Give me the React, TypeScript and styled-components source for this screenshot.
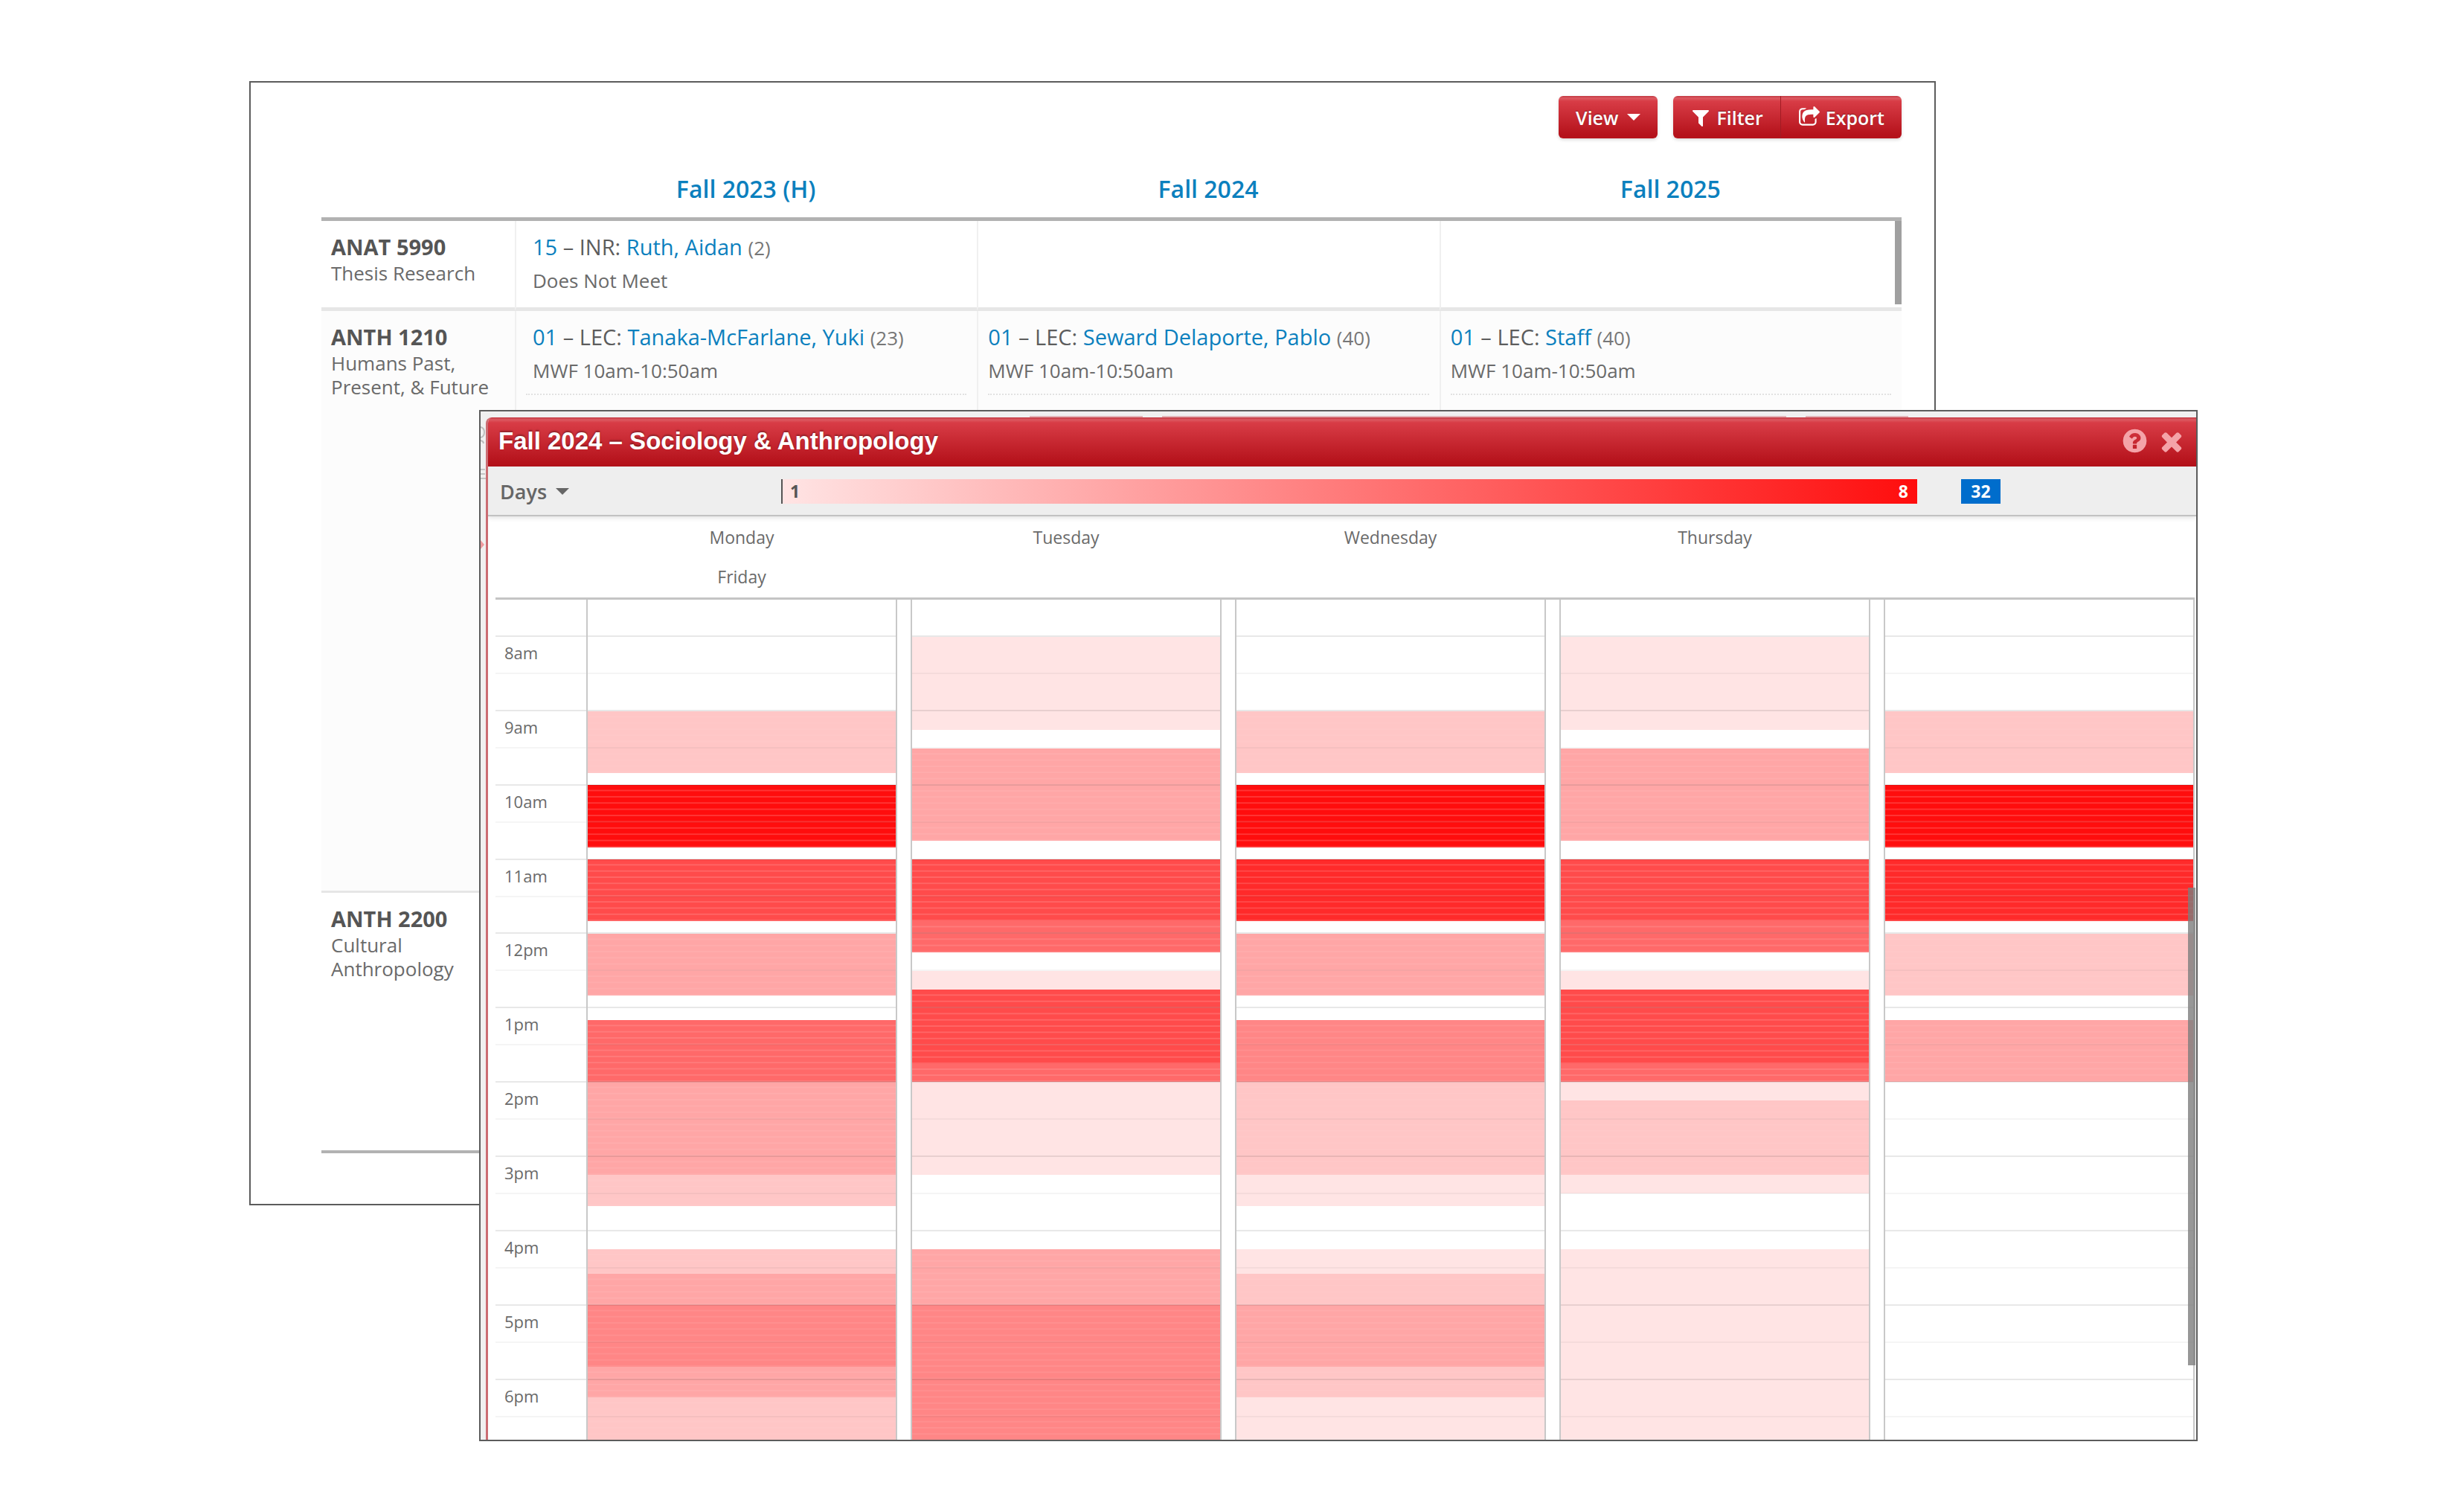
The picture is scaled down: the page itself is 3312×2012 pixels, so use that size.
import React from "react";
import styled, { createGlobalStyle } from "styled-components";

const GlobalStyle = createGlobalStyle`
  * { box-sizing: border-box; }
  body {
    margin: 0;
    background: #ffffff;
    color: #6a6a6a;
    font-family: "Open Sans", "Noto Sans", sans-serif;
    font-size: 26px;
  }
  button { font-family: inherit; border: 0; margin: 0; background: none; cursor: pointer; }
  a { color: #0b80be; text-decoration: none; }
`;

const redGradient = "linear-gradient(#c2363f 0, #dc5a62 3px, #d83c46 7px, #b5121b 92%, #b5121b 100%)";

/* ---------- page ---------- */

const Page = styled.main`
  display: grid;
  grid-template-columns: 335fr 309fr 1958fr 352fr 358fr;
  align-items: start;
  padding: 109px 0 75px;
`;

/* ---------- schedule panel ---------- */

const Panel = styled.section`
  grid-column: 2 / 4;
  grid-row: 1;
  border: 2px solid #5c5c5c;
  background: #ffffff;
  padding: 18px 44px 68px 95px;
`;

const Toolbar = styled.div`
  display: flex;
  justify-content: flex-end;
  gap: 21px;
`;

const ButtonGroup = styled.div`
  display: flex;
  border-radius: 6px;
  overflow: hidden;
  box-shadow: 0 2px 4px rgba(0, 0, 0, 0.15);
`;

const ToolButton = styled.button`
  display: flex;
  align-items: center;
  gap: 7px;
  height: 57px;
  padding: 0 23px;
  background: ${redGradient};
  color: #ffffff;
  font-size: 25px;
  font-weight: 600;
  line-height: 36px;
  text-shadow: 0 -1px 1px rgba(0, 0, 0, 0.35);
  & + & { border-left: 1px solid #a11c24; }
`;

const Caret = styled.span`
  border: 9px solid transparent;
  border-top-color: currentColor;
  border-bottom: 0;
  margin-left: 5px;
`;

const TableWrap = styled.div`
  position: relative;
`;

const Table = styled.table`
  width: 100%;
  table-layout: fixed;
  border-collapse: separate;
  border-spacing: 0;
  border-bottom: 4px solid #b2b2b2;
`;

const TermHead = styled.th`
  height: 111px;
  padding: 46px 0 0;
  border-bottom: 5px solid #b2b2b2;
  color: #0b80be;
  font-size: 32px;
  line-height: 44px;
  font-weight: 600;
  vertical-align: top;
`;

const CornerHead = styled.td`
  width: 260px;
  border-bottom: 5px solid #b2b2b2;
`;

const Row = styled.tr<{ $height: number; $rule: number; $shade?: boolean }>`
  height: ${(p) => p.$height}px;
  background: ${(p) => (p.$shade ? "#fcfcfc" : "#ffffff")};
  & > * { border-bottom: ${(p) => p.$rule}px solid #e6e6e6; }
`;

const CourseCell = styled.th`
  padding: 16px 12px 0 13px;
  text-align: left;
  vertical-align: top;
  font-weight: 400;
  font-size: 26px;
  line-height: 32px;
`;

const CourseCode = styled.div`
  color: #555555;
  font-size: 29px;
  line-height: 38px;
  font-weight: 700;
`;

const TermCell = styled.td<{ $first?: boolean }>`
  padding: 15px 14px 0 13px;
  border-left: 2px solid #f0f0f0;
  vertical-align: top;
`;

const Offering = styled.div<{ $more?: boolean; $indent?: boolean }>`
  padding: 0 0 13px ${(p) => (p.$indent ? "9px" : "0")};
  border-bottom: ${(p) => (p.$more ? "2px dotted #e2e2e2" : "0")};
`;

const OfferingTitle = styled.div`
  color: #5c5c5c;
  font-size: 29px;
  line-height: 40px;
`;

const Seats = styled.span`
  color: #777777;
  font-size: 26px;
`;

const Meets = styled.div`
  margin-top: 6px;
  font-size: 26px;
  line-height: 36px;
`;

const TableThumb = styled.div`
  position: absolute;
  top: 111px;
  right: 0;
  width: 9px;
  height: 112px;
  background: #a0a0a0;
`;

/* ---------- heat map window ---------- */

const Window = styled.section`
  grid-column: 3 / 5;
  grid-row: 1;
  position: relative;
  z-index: 1;
  margin-top: 442px;
  border: 2px solid #5c5c5c;
  background: #f0f0f0;
  display: grid;
  grid-template-columns: 7px 1fr;
`;

const Underlay = styled.div`
  grid-column: 1 / 3;
  height: 8px;
  padding: 6px 0 0 738px;
  display: flex;
`;

const UnderlayBar = styled.span<{ $width: number }>`
  width: ${(p) => p.$width}px;
  margin-right: 26px;
  background: #e3b5b8;
`;

const Edge = styled.div`
  grid-column: 1;
  & > svg { display: block; }
`;

const Sheet = styled.div`
  grid-column: 2;
  border-left: 3px solid #cb6d73;
  border-top-left-radius: 8px;
  background: #ffffff;
  overflow: hidden;
`;

const TitleBar = styled.header`
  display: flex;
  align-items: center;
  gap: 11px;
  height: 66px;
  padding: 0 13px 3px 14px;
  background: ${redGradient};
`;

const Title = styled.h1`
  flex: 1;
  margin: 0;
  color: #ffffff;
  font-family: "Liberation Sans", Arial, sans-serif;
  font-size: 33px;
  line-height: 40px;
  font-weight: 700;
  text-shadow: 0 -2px 2px rgba(0, 0, 0, 0.3);
`;

const IconButton = styled.button`
  display: flex;
  padding: 0;
  color: #f4a3a8;
`;

const Controls = styled.div`
  display: flex;
  align-items: center;
  height: 67px;
  padding: 2px 0 0 16px;
  background: #eeeeee;
  border-bottom: 2px solid #c2c2c2;
  box-shadow: 0 2px 6px rgba(0, 0, 0, 0.12);
`;

const DaysButton = styled.button`
  display: flex;
  align-items: center;
  gap: 7px;
  width: 378px;
  padding: 0;
  color: #666666;
  font-size: 27px;
  line-height: 36px;
  font-weight: 600;
`;

const Legend = styled.div`
  flex: 1;
  display: flex;
  justify-content: space-between;
  height: 33px;
  padding: 0 12px 0 10px;
  border-left: 2px solid #555555;
  background: linear-gradient(90deg, #ffe4e4, #ff0d0d);
  color: #555555;
  font-size: 23px;
  line-height: 32px;
  font-weight: 700;
`;

const LegendMax = styled.span`
  color: #ffffff;
`;

const CountBadge = styled.span`
  width: 53px;
  height: 33px;
  margin: 0 263px 0 59px;
  background: #006dcc;
  color: #ffffff;
  font-size: 23px;
  line-height: 32px;
  font-weight: 700;
  text-align: center;
`;

const columns = "104px repeat(5, 1fr)";

const DayHeads = styled.div`
  display: grid;
  grid-template-columns: ${columns};
  grid-template-rows: 53px 56px;
  column-gap: 18px;
  margin-right: 2px;
  padding: 0 0 0 10px;
`;

const DayHead = styled.div<{ $column: number }>`
  grid-column: ${(p) => p.$column};
  padding-top: 12px;
  font-size: 23px;
  line-height: 32px;
  text-align: center;
`;

const GridArea = styled.div`
  position: relative;
  margin: 0 2px 0 10px;
  border-top: 3px solid #c4c4c4;
`;

const HeatGrid = styled.div`
  display: grid;
  grid-template-columns: ${columns};
  column-gap: 18px;
  height: 1129px;
`;

const Stack = styled.div<{ $bordered?: boolean }>`
  display: grid;
  grid-template: minmax(0, 1fr) / minmax(0, 1fr);
  margin-right: ${(p) => (p.$bordered ? "0" : "-18px")};
  border: solid #c8c8c8;
  border-width: ${(p) => (p.$bordered ? "0 2px" : "0")};
`;

const Layer = styled.div`
  grid-area: 1 / 1;
  display: flex;
  flex-direction: column;
`;

const Block = styled.div<{ $minutes: number; $level: number }>`
  flex: ${(p) => p.$minutes} 0 0;
  background-color: ${(p) => levelColor[p.$level]};
  background-image: linear-gradient(
    transparent calc(100% - 2px),
    rgba(255, 255, 255, ${(p) => seamAlpha[p.$level]}) calc(100% - 2px)
  );
  background-size: 100% calc(100% * 5 / ${(p) => p.$minutes});
`;

const Slot = styled.div<{ $minutes: number; $rule: "none" | "hour" | "half" }>`
  flex: ${(p) => p.$minutes} 0 0;
  min-height: 0;
  padding-left: 12px;
  border-top: ${(p) =>
    p.$rule === "none" ? "0" : p.$rule === "hour" ? "2px solid rgba(0,0,0,0.09)" : "2px solid rgba(0,0,0,0.04)"};
  font-size: 22px;
  line-height: 43px;
`;

const GridThumb = styled.div`
  position: absolute;
  top: 387px;
  right: -1px;
  width: 10px;
  height: 642px;
  background: rgba(125, 125, 125, 0.8);
`;

/* ---------- icons ---------- */

const paths = {
  filter:
    "M1595 295q17 41-14 70l-493 493v742q0 42-39 59-13 5-25 5-27 0-45-19l-256-256q-19-19-19-45v-486l-493-493q-31-29-14-70 17-39 59-39h1280q42 0 59 39z",
  share:
    "M1472 989v259q0 119-84.5 203.5t-203.5 84.5h-832q-119 0-203.5-84.5t-84.5-203.5v-832q0-119 84.5-203.5t203.5-84.5h255q13 0 22.5 9.5t9.5 22.5q0 27-26 32-77 26-133 60-10 4-16 4h-112q-66 0-113 47t-47 113v832q0 66 47 113t113 47h832q66 0 113-47t47-113v-214q0-19 18-29 28-13 54-37 16-16 35-8 21 9 21 29zm237-496l-384 384q-18 19-45 19-12 0-25-5-39-17-39-59v-192h-160q-323 0-438 131-119 137-74 473 3 23-20 34-8 2-12 2-16 0-26-13-10-14-21-31t-39.5-68.5-49.5-99.5-38.5-114-17.5-122q0-49 3.5-91t14-90 28-88 47-81.5 68.5-74 94.5-61.5 124.5-48.5 159.5-30.5 196.5-11h160v-192q0-42 39-59 13-5 25-5 26 0 45 19l384 384q19 19 19 45t-19 45z",
  help:
    "M1024 1376v-192q0-14-9-23t-23-9h-192q-14 0-23 9t-9 23v192q0 14 9 23t23 9h192q14 0 23-9t9-23zm256-672q0-88-55.5-163t-138.5-116-170-41q-243 0-371 213-15 24 8 42l132 100q7 6 19 6 16 0 25-12 53-68 86-92 34-24 86-24 48 0 85.5 26t37.5 59q0 38-20 61t-68 45q-63 28-115.5 86.5t-52.5 125.5v36q0 14 9 23t23 9h192q14 0 23-9t9-23q0-19 21.5-49.5t54.5-49.5q32-18 49-28.5t46-35 44.5-48 28-60.5 12.5-81zm384 192q0 209-103 385.5t-279.5 279.5-385.5 103-385.5-103-279.5-279.5-103-385.5 103-385.5 279.5-279.5 385.5-103 385.5 103 279.5 279.5 103 385.5z",
  close:
    "M1490 1322q0 40-28 68l-136 136q-28 28-68 28t-68-28l-294-294-294 294q-28 28-68 28t-68-28l-136-136q-28-28-28-68t28-68l294-294-294-294q-28-28-28-68t28-68l136-136q28-28 68-28t68 28l294 294 294-294q28-28 68-28t68 28l136 136q28 28 28 68t-28 68l-294 294 294 294q28 28 28 68z",
};

function Icon({ name, size }: { name: keyof typeof paths; size: number }) {
  return (
    <svg width={size} height={size} viewBox="0 0 1792 1792" fill="currentColor" aria-hidden="true">
      <path d={paths[name]} />
    </svg>
  );
}

/* ---------- data ---------- */

const levelColor = [
  "transparent", "#ffe4e4", "#ffc6c6", "#ffa6a6", "#ff8686", "#ff6969", "#ff4b4b", "#ff2a2a", "#ff0d0d",
];
const seamAlpha = [0, 0, 0.03, 0.07, 0.08, 0.12, 0.15, 0.15, 0.17];

// Each entry is [minutes, overlap level]; every day runs from 7:30am to the bottom edge.
type Run = [number, number];
const TOTAL = 679;

const days: { name: string; runs: Run[] }[] = [
  {
    name: "Monday",
    runs: [[90, 0], [50, 2], [10, 0], [50, 8], [10, 0], [50, 6], [10, 0], [50, 3], [20, 0], [50, 5], [75, 3], [25, 2], [35, 0], [20, 2], [25, 3], [50, 4], [25, 3], [34, 2]],
  },
  {
    name: "Tuesday",
    runs: [[30, 0], [75, 1], [15, 0], [75, 3], [15, 0], [50, 6], [25, 5], [15, 0], [15, 1], [60, 6], [15, 5], [75, 1], [60, 0], [45, 3], [109, 4]],
  },
  {
    name: "Wednesday",
    runs: [[90, 0], [50, 2], [10, 0], [50, 8], [10, 0], [50, 7], [10, 0], [50, 3], [20, 0], [50, 4], [75, 2], [25, 1], [35, 0], [20, 1], [25, 2], [50, 3], [25, 2], [34, 1]],
  },
  {
    name: "Thursday",
    runs: [[30, 0], [75, 1], [15, 0], [75, 3], [15, 0], [50, 6], [25, 5], [15, 0], [15, 1], [60, 6], [15, 5], [15, 1], [60, 2], [15, 1], [45, 0], [154, 1]],
  },
  {
    name: "Friday",
    runs: [[90, 0], [50, 2], [10, 0], [50, 8], [10, 0], [50, 7], [10, 0], [50, 2], [20, 0], [50, 3], [289, 0]],
  },
];

const hours = ["8am", "9am", "10am", "11am", "12pm", "1pm", "2pm", "3pm", "4pm", "5pm", "6pm"];

function HourLayer({ labels }: { labels?: boolean }) {
  return (
    <Layer>
      <Slot $minutes={30} $rule="none" />
      {hours.map((hour, i) => (
        <React.Fragment key={hour}>
          <Slot $minutes={30} $rule="hour">{labels ? hour : null}</Slot>
          <Slot $minutes={i === hours.length - 1 ? TOTAL - 660 : 30} $rule="half" />
        </React.Fragment>
      ))}
    </Layer>
  );
}

type OfferingData = { section: string; kind: string; who: string; seats: number; meets: string; more?: boolean };

const courses: {
  code: string; title: string; height: number; rule: number; shade?: boolean; terms: (OfferingData | null)[];
}[] = [
  {
    code: "ANAT 5990", title: "Thesis Research", height: 121, rule: 5,
    terms: [{ section: "15", kind: "INR", who: "Ruth, Aidan", seats: 2, meets: "Does Not Meet" }, null, null],
  },
  {
    code: "ANTH 1210", title: "Humans Past, Present, & Future", height: 782, rule: 3, shade: true,
    terms: [
      { section: "01", kind: "LEC", who: "Tanaka-McFarlane, Yuki", seats: 23, meets: "MWF 10am-10:50am", more: true },
      { section: "01", kind: "LEC", who: "Seward Delaporte, Pablo", seats: 40, meets: "MWF 10am-10:50am", more: true },
      { section: "01", kind: "LEC", who: "Staff", seats: 40, meets: "MWF 10am-10:50am", more: true },
    ],
  },
  { code: "ANTH 2200", title: "Cultural Anthropology", height: 346, rule: 0, terms: [null, null, null] },
];

export default function App() {
  return (
    <>
      <GlobalStyle />
      <Page>
        <Panel>
          <Toolbar>
            <ButtonGroup>
              <ToolButton type="button">View <Caret /></ToolButton>
            </ButtonGroup>
            <ButtonGroup>
              <ToolButton type="button"><Icon name="filter" size={28} />Filter</ToolButton>
              <ToolButton type="button"><Icon name="share" size={30} />Export</ToolButton>
            </ButtonGroup>
          </Toolbar>
          <TableWrap>
            <Table>
              <thead>
                <tr>
                  <CornerHead />
                  <TermHead scope="col">Fall 2023 (H)</TermHead>
                  <TermHead scope="col">Fall 2024</TermHead>
                  <TermHead scope="col">Fall 2025</TermHead>
                </tr>
              </thead>
              <tbody>
                {courses.map((course) => (
                  <Row key={course.code} $height={course.height} $rule={course.rule} $shade={course.shade}>
                    <CourseCell scope="row">
                      <CourseCode>{course.code}</CourseCode>
                      {course.title}
                    </CourseCell>
                    {course.terms.map((o, i) => (
                      <TermCell key={i}>
                        {o && (
                          <Offering $more={o.more} $indent={i === 0}>
                            <OfferingTitle>
                              <a href="#section">{o.section}</a> – {o.kind}: <a href="#instructor">{o.who}</a>{" "}
                              <Seats>({o.seats})</Seats>
                            </OfferingTitle>
                            <Meets>{o.meets}</Meets>
                          </Offering>
                        )}
                      </TermCell>
                    ))}
                  </Row>
                ))}
              </tbody>
            </Table>
            <TableThumb />
          </TableWrap>
        </Panel>

        <Window>
          <Underlay>
            <UnderlayBar $width={152} />
            <UnderlayBar $width={839} />
            <UnderlayBar $width={138} />
          </Underlay>
          <Edge>
            <svg width="7" height="200" viewBox="0 0 7 200" fill="none" aria-hidden="true">
              <path d="M0 13q5 1 5 7t-5 7M0 31q4 1 4 4" stroke="#bdbdbd" strokeWidth="2" />
              <path d="M0 70h6M0 76h6M0 82h7" stroke="#c4c4c4" strokeWidth="2" />
              <path d="M0 165l5 6-5 6z" fill="#ee9a9e" />
            </svg>
          </Edge>
          <Sheet>
            <TitleBar>
              <Title>Fall 2024 – Sociology &amp; Anthropology</Title>
              <IconButton type="button" aria-label="Help"><Icon name="help" size={37} /></IconButton>
              <IconButton type="button" aria-label="Close"><Icon name="close" size={40} /></IconButton>
            </TitleBar>
            <Controls>
              <DaysButton type="button">Days <Caret /></DaysButton>
              <Legend>
                <span>1</span>
                <LegendMax>8</LegendMax>
              </Legend>
              <CountBadge>32</CountBadge>
            </Controls>
            <DayHeads>
              {days.map((day, i) => (
                <DayHead key={day.name} $column={i < 4 ? i + 2 : 2}>{day.name}</DayHead>
              ))}
            </DayHeads>
            <GridArea>
              <HeatGrid>
                <Stack><HourLayer labels /></Stack>
                {days.map((day) => (
                  <Stack key={day.name} $bordered>
                    <Layer>
                      {day.runs.map(([minutes, level], i) => (
                        <Block key={i} $minutes={minutes} $level={level} />
                      ))}
                    </Layer>
                    <HourLayer />
                  </Stack>
                ))}
              </HeatGrid>
              <GridThumb />
            </GridArea>
          </Sheet>
        </Window>
      </Page>
    </>
  );
}
